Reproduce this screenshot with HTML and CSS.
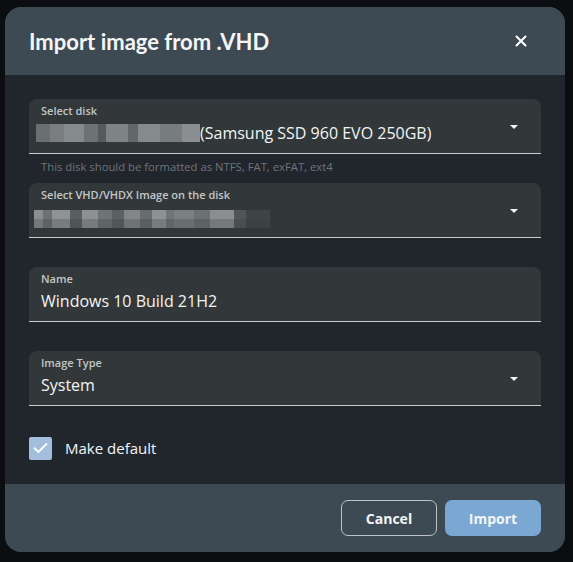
FILE: index.html
```html
<!DOCTYPE html>
<html>
<head>
<meta charset="utf-8">
<link rel="stylesheet" href="styles.css">
</head>
<body>
<div class="backdrop">
  <div class="dialog">
    <div class="header">
      <h1 class="title">Import image from .VHD</h1>
      <button class="close" aria-label="Close">
        <svg width="12" height="12" viewBox="0 0 12 12"><path d="M1.5 1.5 L10.5 10.5 M10.5 1.5 L1.5 10.5" stroke="#fff" stroke-width="2" stroke-linecap="round"/></svg>
      </button>
    </div>
    <div class="body">
      <div class="field-block">
        <div class="field">
          <div class="label">Select disk</div>
          <div class="value-row">
            <span class="blur blur-a"></span><span class="value">(Samsung SSD 960 EVO 250GB)</span>
          </div>
          <span class="arrow"></span>
        </div>
        <div class="hint">This disk should be formatted as NTFS, FAT, exFAT, ext4</div>
      </div>
      <div class="field-block">
        <div class="field">
          <div class="label">Select VHD/VHDX Image on the disk</div>
          <div class="value-row">
            <span class="blur blur-b"></span>
          </div>
          <span class="arrow"></span>
        </div>
      </div>
      <div class="field-block">
        <div class="field">
          <div class="label">Name</div>
          <div class="value-row"><span class="value">Windows 10 Build 21H2</span></div>
        </div>
      </div>
      <div class="field-block">
        <div class="field">
          <div class="label">Image Type</div>
          <div class="value-row"><span class="value">System</span></div>
          <span class="arrow"></span>
        </div>
      </div>
      <label class="check">
        <span class="box">
          <svg width="15" height="12" viewBox="0 0 15 12"><path d="M1.5 6.2 L5.4 10 L13.5 2" fill="none" stroke="#fff" stroke-width="1.8" stroke-linecap="round" stroke-linejoin="round"/></svg>
        </span>
        <span class="check-label">Make default</span>
      </label>
    </div>
    <div class="footer">
      <button class="btn btn-outline">Cancel</button>
      <button class="btn btn-primary">Import</button>
    </div>
  </div>
</div>
</body>
</html>
```

FILE: styles.css
```css
html, body {
  margin: 0;
  padding: 0;
  height: 100%;
}
body {
  background: #0b0d10;
  font-family: "Open Sans", "Noto Sans", sans-serif;
  color: #fff;
}
.backdrop {
  height: 562px;
  padding: 7px 8px 10px 5px;
  box-sizing: border-box;
  background-color: #0b0d10;
  background-image: repeating-linear-gradient(to bottom, transparent 0, transparent 72px, #353a40 72px, #353a40 73px, transparent 73px, transparent 120px);
  background-size: 100% 48px;
  background-position: 0 25px;
}
.dialog {
  width: 560px;
  height: 545px;
  border-radius: 16px;
  overflow: hidden;
  display: flex;
  flex-direction: column;
  background: #21262d;
}
.header {
  height: 68px;
  flex: none;
  background: #3e4a53;
  display: flex;
  align-items: center;
  justify-content: space-between;
  padding: 0 38px 0 24px;
}
.title {
  margin: 0;
  font-family: "Lato", "Open Sans", sans-serif;
  font-size: 22px;
  font-weight: 700;
  letter-spacing: 0;
  color: #f4f5f6;
}
.close {
  background: none;
  border: 0;
  padding: 0;
  width: 12px;
  height: 12px;
  display: flex;
}
.body {
  flex: 1;
  padding: 24px 24px 0 24px;
  display: flex;
  flex-direction: column;
}
.field-block {
  height: 84px;
  flex: none;
}
.field {
  position: relative;
  height: 55px;
  box-sizing: border-box;
  background: #323839;
  border-radius: 8px 8px 0 0;
  border-bottom: 1px solid #c9cbcc;
  padding: 5px 12px 0 12px;
}
.label {
  font-size: 11px;
  font-weight: 600;
  color: #c3c6c8;
  line-height: 14px;
}
.value-row {
  display: flex;
  align-items: center;
  height: 26px;
  margin-top: 2px;
}
.value {
  font-size: 16px;
  font-weight: 500;
  color: #f3f4f5;
}
.arrow {
  position: absolute;
  right: 23px;
  top: 26px;
  width: 0;
  height: 0;
  border-left: 4px solid transparent;
  border-right: 4px solid transparent;
  border-top: 4px solid #f3f4f5;
}
.hint {
  font-size: 11.3px;
  font-weight: 500;
  color: #6d7479;
  padding: 6px 12px 0;
  line-height: 14px;
}
.blur {
  display: block;
  height: 18px;
}
.blur-a {
  width: 164px;
  margin-left: -5px;
  background:
    linear-gradient(to right, #6a6f72 0 14px, #7a7e80 14px 28px, #858a8b 28px 48px, #6d7274 48px 62px, #555a5c 62px 70px, #7e8385 70px 92px, #62676a 92px 102px, #858a8b 102px 124px, #777c7e 124px 146px, #8a8e90 146px 164px);
}
.blur-b {
  width: 236px;
  height: 18px;
  margin-left: -7px;
  margin-top: 4px;
  background:
    linear-gradient(to bottom, rgba(50,56,57,0) 0 9px, rgba(50,56,57,0.25) 9px 18px),
    linear-gradient(to right, #8a8e90 0 9px, #6c7173 9px 18px, #8f9394 18px 36px, #595e60 36px 48px, #8d9192 48px 64px, #6e7375 64px 78px, #5b6062 78px 90px, #828688 90px 106px, #676c6e 106px 118px, #8e9293 118px 132px, #707577 132px 140px, #7b8082 140px 160px, #6b7072 160px 176px, #8a8e90 176px 200px, #50555a 200px 212px, #3f4547 212px 236px);
}
.check {
  display: flex;
  align-items: center;
  margin-top: 1px;
  height: 24px;
}
.box {
  width: 23px;
  height: 23px;
  box-sizing: border-box;
  background: #a3bedc;
  border-radius: 2px;
  display: flex;
  align-items: center;
  justify-content: center;
}
.check-label {
  margin-left: 13px;
  font-size: 15px;
  font-weight: 500;
  color: #f3f4f5;
}
.footer {
  height: 68px;
  flex: none;
  background: #3e4a53;
  display: flex;
  align-items: center;
  justify-content: flex-end;
  gap: 8px;
  padding: 0 24px;
}
.btn {
  height: 36px;
  width: 96px;
  border-radius: 7px;
  font-family: inherit;
  font-size: 14px;
  font-weight: 700;
  color: #f3f4f5;
}
.btn-outline {
  background: transparent;
  border: 1px solid #bfc3c6;
}
.btn-primary {
  background: #7aa8d2;
  border: 0;
}
```
